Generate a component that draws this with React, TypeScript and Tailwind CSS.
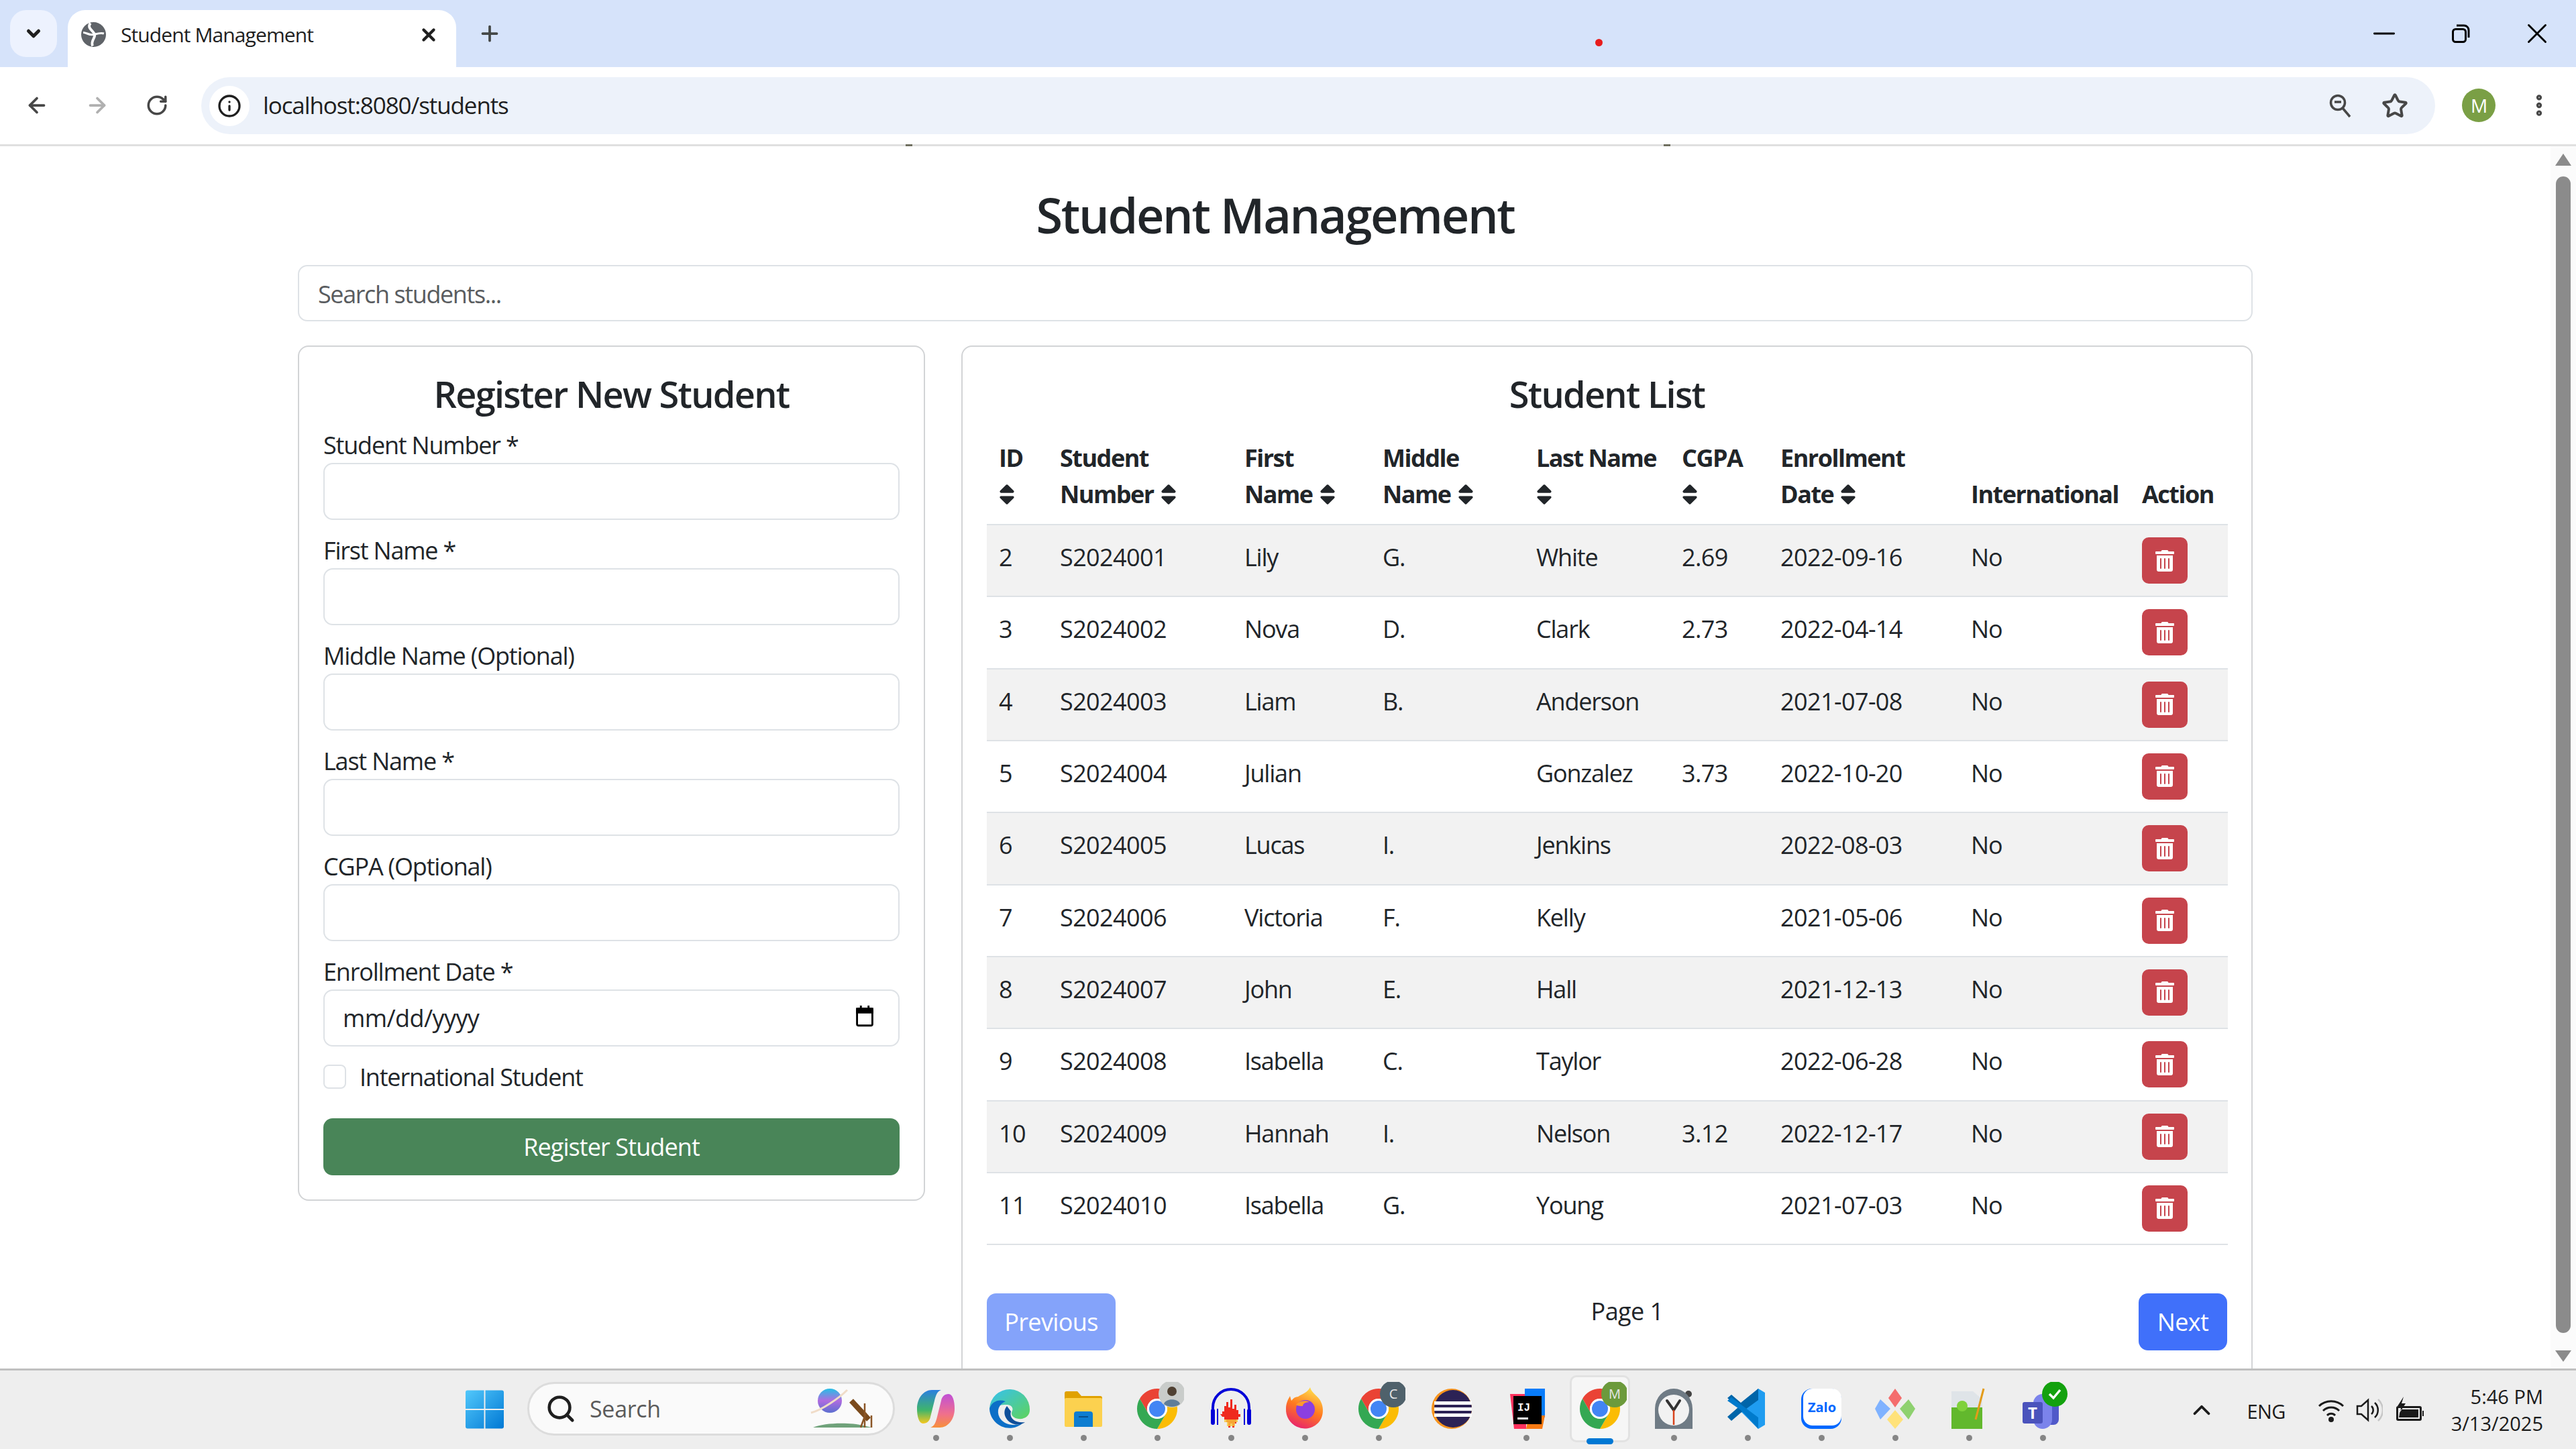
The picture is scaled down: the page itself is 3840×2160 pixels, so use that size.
import { FaSort, FaTrashAlt } from 'react-icons/fa';
import { ArrowLeft, ArrowRight, ChevronDown, ChevronUp, EllipsisVertical, Info, Minus, Plus, RotateCw, Search, Star, X } from 'lucide-react';
import type { ReactNode } from 'react';

const students = [
  [2, 'S2024001', 'Lily', 'G.', 'White', '2.69', '2022-09-16'],
  [3, 'S2024002', 'Nova', 'D.', 'Clark', '2.73', '2022-04-14'],
  [4, 'S2024003', 'Liam', 'B.', 'Anderson', '', '2021-07-08'],
  [5, 'S2024004', 'Julian', '', 'Gonzalez', '3.73', '2022-10-20'],
  [6, 'S2024005', 'Lucas', 'I.', 'Jenkins', '', '2022-08-03'],
  [7, 'S2024006', 'Victoria', 'F.', 'Kelly', '', '2021-05-06'],
  [8, 'S2024007', 'John', 'E.', 'Hall', '', '2021-12-13'],
  [9, 'S2024008', 'Isabella', 'C.', 'Taylor', '', '2022-06-28'],
  [10, 'S2024009', 'Hannah', 'I.', 'Nelson', '3.12', '2022-12-17'],
  [11, 'S2024010', 'Isabella', 'G.', 'Young', '', '2021-07-03'],
];

const fields = ['Student Number *', 'First Name *', 'Middle Name (Optional)', 'Last Name *', 'CGPA (Optional)'];

function Field({ label, children }: { label: string; children?: ReactNode }) {
  return (
    <div className="mb-[18px]">
      <label className="block h-[54px] leading-[56px]">{label}</label>
      {children ?? <input className="block w-full h-[85px] border-2 border-[#dee2e6] rounded-[14px] bg-white" />}
    </div>
  );
}

function Th({ lines, sort = true }: { lines: string[]; sort?: boolean }) {
  return (
    <th className="p-[18px] pb-[17px] text-left align-bottom font-bold leading-[54px] tracking-[-1.5px]">
      {lines.map((l, i) => (
        <div key={i} className="whitespace-nowrap">
          {l}
          {sort && i === lines.length - 1 && (
            <FaSort className={`inline-block w-[24px] h-[38px] align-[-6px] ${l ? 'ml-[10px]' : ''}`} />
          )}
        </div>
      ))}
    </th>
  );
}

function ChromeLogo({ badge, badgeColor }: { badge?: string; badgeColor?: string }) {
  return (
    <svg viewBox="0 0 80 80" className="w-[80px] h-[80px]">
      <path d="M66 25A30 30 0 0 0 14 25L27 47.500A15 15 0 0 1 40 25z" fill="#ea4335" />
      <path d="M66 25A30 30 0 0 1 40 70L53 47.500A15 15 0 0 0 40 25z" fill="#fbbc04" />
      <path d="M40 70A30 30 0 0 1 14 25L27 47.500A15 15 0 0 0 53 47.500z" fill="#34a853" />
      <circle cx="40" cy="40" r="15" fill="#fff" />
      <circle cx="40" cy="40" r="12" fill="#4285f4" />
      {badge === 'photo' && (
        <>
          <circle cx="62" cy="18" r="20" fill="#c9ccca" />
          <circle cx="62" cy="14" r="7" fill="#4f4032" />
          <path d="M50 33c2-9 22-9 24 0a20 20 0 0 1-24 0z" fill="#5f7d99" />
        </>
      )}
      {badge && badge !== 'photo' && (
        <>
          <circle cx="62" cy="18" r="20" fill={badgeColor} />
          <text x="62" y="25" textAnchor="middle" fontSize="20" fill="#e6e6e6" fontFamily="'Open Sans', sans-serif">{badge}</text>
        </>
      )}
    </svg>
  );
}

const taskIcons: ReactNode[] = [
  // copilot
  <svg viewBox="0 0 80 80" className="w-[80px] h-[80px]" key="copilot">
    <defs>
      <linearGradient id="cpA" x1="0" y1="0" x2="0" y2="1"><stop offset="0" stopColor="#2b7fe0" /><stop offset="0.6" stopColor="#3fb56b" /><stop offset="1" stopColor="#f7c81e" /></linearGradient>
      <linearGradient id="cpB" x1="0" y1="0" x2="0" y2="1"><stop offset="0" stopColor="#c04fd6" /><stop offset="0.6" stopColor="#f0708c" /><stop offset="1" stopColor="#f7903a" /></linearGradient>
    </defs>
    <path d="M34 12h14c-6 2-8 8-10 16l-6 24c-1 6-5 10-11 10-6 0-9-10-9-22 0-16 10-28 22-28z" fill="url(#cpA)" />
    <path d="M46 68H32c6-2 8-8 10-16l6-24c1-6 5-10 11-10 6 0 9 10 9 22 0 16-10 28-22 28z" fill="url(#cpB)" />
  </svg>,
  // edge
  <svg viewBox="0 0 80 80" className="w-[80px] h-[80px]" key="edge">
    <defs>
      <linearGradient id="edA" x1="0" y1="0" x2="1" y2="1"><stop offset="0" stopColor="#35c1f1" /><stop offset="1" stopColor="#5fd35b" /></linearGradient>
    </defs>
    <path d="M10 40a30 30 0 0 1 60 2c0 9-8 14-17 13-8-1-12-6-9-12 2-5-2-9-9-9-14 0-25 6-25 6z" fill="url(#edA)" />
    <path d="M10 40c3-10 13-15 24-11-10 4-14 14-9 24 5 9 17 14 34 9a30 30 0 0 1-49-22z" fill="#0c6fc7" />
    <path d="M36 36c-6 7-5 18 6 25 8 4 15 3 21-1-15 2-24-6-21-16z" fill="#0f4f99" />
  </svg>,
  // explorer
  <svg viewBox="0 0 80 80" className="w-[80px] h-[80px]" key="folder">
    <path d="M12 17a3 3 0 0 1 3-3h16l6 7h28a3 3 0 0 1 3 3v8H12z" fill="#e0a100" />
    <rect x="12" y="24" width="56" height="43" rx="2" fill="#fcd14f" />
    <path d="M26 67V48a4 4 0 0 1 4-4h20a4 4 0 0 1 4 4v19z" fill="#0d7dd1" />
    <rect x="33" y="51" width="14" height="2" fill="#0a4f8a" />
  </svg>,
  <ChromeLogo badge="photo" key="c1" />,
  // audacity
  <svg viewBox="0 0 80 80" className="w-[80px] h-[80px]" key="audacity">
    <path d="M13 50V38a27 27 0 0 1 54 0v12" fill="none" stroke="#0000d8" strokeWidth="4" />
    <rect x="10" y="40" width="6" height="24" rx="3" fill="#0000d8" />
    <rect x="64" y="40" width="6" height="24" rx="3" fill="#0000d8" />
    <rect x="19" y="40" width="2" height="24" fill="#0000d8" />
    <rect x="59" y="40" width="2" height="24" fill="#0000d8" />
    <path d="M24 48h3v-4h3v-8h3v-6h3v8h3v-12h3v14h3v-6h3v8h3v6h3v4h-3v4h-3v6h-3v6h-3v-6h-3v6h-3v-8h-3v-4h-3v-4h-3z" fill="#ef2a1e" />
    <path d="M30 56h20v4h-4v6h-12v-6h-4z" fill="#f7c53a" opacity="0.8" />
  </svg>,
  // firefox
  <svg viewBox="0 0 80 80" className="w-[80px] h-[80px]" key="firefox">
    <defs>
      <linearGradient id="ffA" x1="0.7" y1="0" x2="0.3" y2="1"><stop offset="0" stopColor="#ffe14d" /><stop offset="0.5" stopColor="#ff7a1f" /><stop offset="1" stopColor="#e8216e" /></linearGradient>
    </defs>
    <path d="M48 8c2 8 8 10 14 18 8 12 6 28-3 36a28 28 0 0 1-47-22c0-8 3-14 6-19l2 7c3-4 6-6 10-6 6-4 14-6 18-14z" fill="url(#ffA)" />
    <circle cx="41" cy="41" r="14" fill="#8b3fe0" />
    <path d="M27 34c4-4 12-8 20-4-8 0-10 4-10 6-4 0-7 0-10-2z" fill="#ff9a2e" />
  </svg>,
  <ChromeLogo badge="C" badgeColor="#4f616b" key="c2" />,
  // eclipse
  <svg viewBox="0 0 80 80" className="w-[80px] h-[80px]" key="eclipse">
    <circle cx="39" cy="40" r="30" fill="#f7941e" />
    <circle cx="41" cy="40" r="28" fill="#2c2255" />
    <rect x="13" y="29" width="56" height="5" fill="#fff" />
    <rect x="13" y="38" width="56" height="5" fill="#fff" />
    <rect x="13" y="47" width="56" height="5" fill="#fff" />
  </svg>,
  // intellij
  <svg viewBox="0 0 80 80" className="w-[80px] h-[80px]" key="idea">
    <path d="M16 18h24v52H22z" fill="#fe315d" />
    <path d="M38 10h30v42l-8 10H38z" fill="#087cfa" />
    <path d="M44 50h24l-4 20H40z" fill="#f97a12" />
    <rect x="21" y="21" width="42" height="42" fill="#000" />
    <rect x="27" y="53" width="16" height="3" fill="#fff" />
    <text x="27" y="43" fontSize="16" fontWeight="700" fill="#fff" fontFamily="'Liberation Mono', monospace">IJ</text>
  </svg>,
  <div className="w-[90px] h-[100px] flex items-center justify-center bg-[#f6f6f6] border-[3px] border-[#e2e2e2] rounded-[10px] -mt-[10px]" key="c3"><ChromeLogo badge="M" badgeColor="#6c9a3c" /></div>,
  // clock
  <svg viewBox="0 0 80 80" className="w-[80px] h-[80px]" key="clock">
    <circle cx="62" cy="18" r="5" fill="#444" />
    <path d="M12 40a28 30 0 1 1 56 0v30H12z" fill="#6f7b85" />
    <circle cx="40" cy="42" r="23" fill="#f2f2f2" />
    <path d="M40 42 30 28M40 42l9-14" stroke="#333" strokeWidth="4" strokeLinecap="round" />
    <path d="M40 42v22" stroke="#d8421b" strokeWidth="2.500" />
  </svg>,
  // vs code
  <svg viewBox="0 0 80 80" className="w-[80px] h-[80px]" key="vscode">
    <path d="M56 10 66 16v48l-10 6-26-26V34z" fill="#1f9cf0" />
    <path d="M56 10v17L30 46 16 58l-6-6 16-14-16-14 6-5 14 12z" fill="#0065a9" />
    <path d="M56 70V53L16 23l-6 5 20 14 26 28z" fill="#007acc" />
  </svg>,
  // zalo
  <svg viewBox="0 0 80 80" className="w-[80px] h-[80px]" key="zalo">
    <rect x="10" y="10" width="60" height="60" rx="16" fill="#0068ff" />
    <rect x="13" y="10" width="57" height="55" rx="14" fill="#fff" />
    <text x="41" y="45" textAnchor="middle" fontSize="20" fontWeight="700" fill="#0068ff" fontFamily="'Open Sans', sans-serif">Zalo</text>
  </svg>,
  // git gui
  <svg viewBox="0 0 80 80" className="w-[80px] h-[80px]" key="git">
    <path d="M40 10 50 24 40 38 30 24z" fill="#f46d6d" />
    <path d="M18 26 33 40 18 56 10 40z" fill="#7fb2ff" />
    <path d="M60 26 70 40 60 56 47 40z" fill="#8ed16f" />
    <path d="M40 42 52 56 40 70 28 56z" fill="#ffe27a" />
  </svg>,
  // notepad++
  <svg viewBox="0 0 80 80" className="w-[80px] h-[80px]" key="npp">
    <path d="M14 14h32l14 12v42H14z" fill="#dfe4e8" />
    <path d="M14 38h46v32H14z" fill="#62b82d" />
    <circle cx="30" cy="36" r="8" fill="#7fd13b" />
    <path d="M62 10 50 56" stroke="#e39b19" strokeWidth="3" />
  </svg>,
  // teams
  <svg viewBox="0 0 80 80" className="w-[80px] h-[80px]" key="teams">
    <rect x="44" y="22" width="20" height="42" rx="8" fill="#5059c9" />
    <rect x="26" y="18" width="28" height="52" rx="14" fill="#7b83eb" />
    <rect x="10" y="30" width="30" height="32" rx="3" fill="#4b53bc" />
    <text x="25" y="55" textAnchor="middle" fontSize="24" fontWeight="700" fill="#fff" fontFamily="'Open Sans', sans-serif">T</text>
    <circle cx="58" cy="18" r="19" fill="#13a10e" />
    <path d="M50 18l6 6 10-12" fill="none" stroke="#fff" strokeWidth="3.500" />
  </svg>,
];

export default function App() {
  return (
    <div className="w-[3840px] h-[2160px] flex flex-col overflow-hidden bg-white text-[#212529] text-[36px] font-['Open_Sans',sans-serif] tracking-[-1.2px]">
      {/* Window title bar */}
      <div className="relative h-[100px] shrink-0 flex bg-[#d6e3fa]">
        <div className="ml-[15px] mt-[15px] w-[70px] h-[70px] rounded-[24px] bg-[#edf2fe] flex items-center justify-center">
          <ChevronDown size={30} strokeWidth={4} color="#1f1f1f" />
        </div>
        <div className="ml-[16px] mt-[15px] w-[579px] h-[85px] rounded-t-[26px] bg-white flex items-center pl-[20px] pr-[26px] pb-[12px]">
          <svg viewBox="0 0 24 24" className="w-[37px] h-[37px] shrink-0">
            <circle cx="12" cy="12" r="12" fill="#5f6368" />
            <path d="M9 1C5 6 12 8 13 12 14 15 9 18 11 23" fill="none" stroke="#fff" strokeWidth="2.500" />
            <path d="M2 10c3 0 6 3 10 2s7-2 10-1" fill="none" stroke="#fff" strokeWidth="2" />
          </svg>
          <span className="ml-[22px] text-[30px] tracking-[-0.9px] text-[#1f1f1f] whitespace-nowrap">Student Management</span>
          <X className="ml-auto" size={30} strokeWidth={3.5} color="#1f1f1f" />
        </div>
        <Plus className="ml-[32px] mt-[32px]" size={36} strokeWidth={2.5} color="#444746" />
        <div className="absolute left-[2378px] top-[58px] w-[11px] h-[11px] rounded-full bg-[#e81c1c]" />
        <div className="ml-auto flex pt-[25px] pr-[33px] gap-[64px]">
          <Minus size={50} strokeWidth={1.4} color="#000" />
          <svg viewBox="0 0 50 50" className="w-[50px] h-[50px]" fill="none" stroke="#000" strokeWidth="3">
            <rect x="13.500" y="18.500" width="19" height="19" rx="4" />
            <path d="M19 13h11a7 7 0 0 1 7 7v11" />
          </svg>
          <X size={50} strokeWidth={1.4} color="#000" />
        </div>
      </div>

      {/* Browser toolbar */}
      <div className="relative h-[118px] shrink-0 flex items-start border-b-[3px] border-[#e0e0e0] bg-white">
        <div className="absolute left-[1350px] top-[115px] w-[10px] h-[3px] bg-[#6f6f5f]" />
        <div className="absolute left-[2480px] top-[115px] w-[10px] h-[3px] bg-[#6f6f5f]" />
        <div className="w-[300px] h-[115px] flex items-center pl-[37px] gap-[54px] pb-[1px]">
          <ArrowLeft size={36} strokeWidth={2.5} color="#474747" />
          <ArrowRight size={36} strokeWidth={2.5} color="#b0b0b0" />
          <RotateCw size={34} strokeWidth={2.5} color="#474747" />
        </div>
        <div className="mt-[15px] w-[3330px] h-[85px] rounded-full bg-[#edf2fa] flex items-center pl-[12px]">
          <div className="w-[60px] h-[60px] rounded-full bg-white flex items-center justify-center">
            <Info size={36} strokeWidth={2.2} color="#1f1f1f" />
          </div>
          <span className="ml-[20px] text-[35px] tracking-[-1.1px] text-[#1f1f1f]">localhost:8080/students</span>
          <svg viewBox="0 0 40 40" className="ml-auto w-[40px] h-[40px]" fill="none" stroke="#474747" strokeWidth="3.500">
            <circle cx="15" cy="15" r="10.500" />
            <path d="M22 23l11 13" />
            <path d="M10 14h10" />
          </svg>
          <Star className="ml-[40px] mr-[40px]" size={40} strokeWidth={2.4} color="#474747" />
        </div>
        <div className="mt-[32px] ml-[40px] w-[50px] h-[50px] rounded-full bg-[#7a9f45] text-white text-[28px] leading-[50px] text-center">M</div>
        <EllipsisVertical className="mt-[37px] ml-[45px]" size={40} strokeWidth={3} color="#474747" />
      </div>

      {/* Page */}
      <div className="flex-1 min-h-0 flex overflow-hidden">
        <main className="flex-1 min-w-0 px-[444px] pr-[444px] pt-[59px] overflow-hidden">
          <h1 className="text-[72px] leading-[86px] font-semibold tracking-[-2.3px] text-center">Student Management</h1>
          <input placeholder="Search students..." className="mt-[32px] block w-full h-[84px] px-[28px] pt-[2px] border-2 border-[#dee2e6] rounded-[14px] tracking-[-1.4px] placeholder:text-[#595c5f]" />
          <div className="mt-[36px] flex items-start gap-[54px]">
            {/* Register form */}
            <section className="w-[935px] h-[1275px] shrink-0 border-2 border-[#d2d4d6] rounded-[16px] px-[36px] pt-[38px]">
              <h3 className="text-[54px] leading-[65px] font-semibold tracking-[-1.7px] text-center mb-[16px]">Register New Student</h3>
              {fields.map(f => <Field key={f} label={f} />)}
              <Field label="Enrollment Date *">
                <div className="h-[85px] border-2 border-[#dee2e6] rounded-[14px] flex items-center pl-[27px] pr-[36px] tracking-[-0.6px]">
                  <span>mm/dd/yyyy</span>
                  <svg viewBox="0 0 24 28" className="ml-auto w-[28px] h-[32px] -mt-[6px]" fill="none" stroke="#000" strokeWidth="2.500">
                    <rect x="2" y="4" width="20" height="22" rx="2" />
                    <path d="M2 4h20v5H2z" fill="#000" />
                    <path d="M7 0v4M17 0v4" />
                  </svg>
                </div>
              </Field>
              <div className="flex items-center h-[54px]">
                <div className="w-[34px] h-[36px] border-2 border-[#dee2e6] rounded-[8px]" />
                <span className="ml-[20px] mt-[2px]">International Student</span>
              </div>
              <button className="mt-[35px] w-full h-[85px] rounded-[14px] bg-[#498558] text-white tracking-[-0.9px]">Register Student</button>
            </section>

            {/* Student table */}
            <section className="flex-1 min-w-0 h-[1600px] border-2 border-[#d2d4d6] rounded-[16px] px-[36px] pt-[38px]">
              <h3 className="text-[54px] leading-[65px] font-semibold tracking-[-1.7px] text-center mb-[18px]">Student List</h3>
              <table className="table-fixed w-full border-collapse">
                <colgroup>
                  <col className="w-[91px]" />
                  <col className="w-[275px]" />
                  <col className="w-[206px]" />
                  <col className="w-[229px]" />
                  <col className="w-[217px]" />
                  <col className="w-[147px]" />
                  <col className="w-[284px]" />
                  <col className="w-[255px]" />
                  <col className="w-[146px]" />
                </colgroup>
                <thead>
                  <tr>
                    <Th lines={['ID', '']} />
                    <Th lines={['Student', 'Number']} />
                    <Th lines={['First', 'Name']} />
                    <Th lines={['Middle', 'Name']} />
                    <Th lines={['Last Name', '']} />
                    <Th lines={['CGPA', '']} />
                    <Th lines={['Enrollment', 'Date']} />
                    <Th lines={['International']} sort={false} />
                    <Th lines={['Action']} sort={false} />
                  </tr>
                </thead>
                <tbody>
                  {students.map((s, i) => (
                    <tr key={s[0]} className={`h-[107.330px] border-t-2 border-[#dee2e6] ${i === students.length - 1 ? 'border-b-2' : ''} ${i % 2 === 0 ? 'bg-[#f2f2f2]' : ''}`}>
                      {s.map((v, j) => (
                        <td key={j} className={`pt-[19px] px-[18px] align-top leading-[58px] whitespace-nowrap ${j === 2 || j === 3 || j === 4 ? '' : 'tracking-[-0.6px]'}`}>{v}</td>
                      ))}
                      <td className="pt-[19px] px-[18px] align-top leading-[58px]">No</td>
                      <td className="p-[18px] align-top">
                        <button className="w-[68px] h-[69px] rounded-[10px] bg-[#c6444c] flex items-center justify-center">
                          <FaTrashAlt size={32} color="#fff" />
                        </button>
                      </td>
                    </tr>
                  ))}
                </tbody>
              </table>
              <div className="mt-[72px] flex justify-between items-start tracking-[-0.6px]">
                <button className="w-[192px] h-[85px] rounded-[14px] bg-[#84a3fa] text-white">Previous</button>
                <span className="leading-[54px]">Page 1</span>
                <button className="w-[132px] h-[85px] rounded-[14px] bg-[#4070fa] text-white">Next</button>
              </div>
            </section>
          </div>
        </main>

        {/* Scrollbar */}
        <div className="w-[38px] shrink-0 bg-[#fbfbfb] flex flex-col items-center pt-[11px]">
          <div className="w-0 h-0 border-x-[12px] border-x-transparent border-b-[18px] border-b-[#8b8b8b]" />
          <div className="mt-[16px] w-[22px] h-[1724px] rounded-full bg-[#8b8b8b]" />
          <div className="mt-[26px] w-0 h-0 border-x-[12px] border-x-transparent border-t-[17px] border-t-[#8b8b8b]" />
        </div>
      </div>

      {/* Windows taskbar */}
      <div className="h-[120px] shrink-0 flex border-t-[3px] border-[#c0c0c0] bg-[#eeeeee] pl-[694px] tracking-normal">
        <svg viewBox="0 0 58 58" className="mt-[29px] w-[57px] h-[58px] shrink-0">
          <defs>
            <linearGradient id="win" x1="0" y1="0" x2="1" y2="1"><stop offset="0" stopColor="#52c8fb" /><stop offset="1" stopColor="#0078d4" /></linearGradient>
          </defs>
          <path d="M0 3a3 3 0 0 1 3-3h25v28H0zM30 0h25a3 3 0 0 1 3 3v25H30zM0 30h28v28H3a3 3 0 0 1-3-3zM30 30h28v25a3 3 0 0 1-3 3H30z" fill="url(#win)" />
        </svg>
        <div className="ml-[35px] mt-[17px] w-[548px] h-[80px] shrink-0 rounded-full bg-[#fafafa] border-[3px] border-[#dcdcdc] flex items-center pl-[24px]">
          <Search size={46} strokeWidth={2.4} color="#1f1f1f" />
          <span className="ml-[20px] text-[34px] tracking-[-0.3px] text-[#5a5a5a]">Search</span>
          <svg viewBox="0 0 104 60" className="ml-auto mr-[20px] w-[104px] h-[60px]">
            <defs>
              <linearGradient id="planet" x1="0" y1="0" x2="0" y2="1"><stop offset="0" stopColor="#25bfe6" /><stop offset="0.5" stopColor="#b06be0" /><stop offset="1" stopColor="#5b6fd0" /></linearGradient>
            </defs>
            <path d="M5 58c15-7 50-8 70-4l18 4z" fill="#6fa27a" />
            <ellipse cx="30" cy="18" rx="18" ry="18" fill="url(#planet)" />
            <path d="M2 36C18 32 44 14 56 2" fill="none" stroke="#f0dcc8" strokeWidth="3" />
            <path d="M62 18 88 46" stroke="#7a4a1c" strokeWidth="8" />
            <path d="M82 22v36M92 40v18M76 58l8-22" stroke="#8a5525" strokeWidth="2.500" />
          </svg>
        </div>
        <div className="ml-[6px] flex items-start">
          {taskIcons.map((icon, i) => (
            <div key={i} className="relative w-[110px] h-full flex flex-col items-center pt-[17px]">
              {icon}
              {i === 9 ? (
                <div className="absolute bottom-[7px] w-[40px] h-[9px] rounded-full bg-[#0078d4]" />
              ) : i !== 7 ? (
                <div className="-mt-[1px] w-[9px] h-[9px] rounded-full bg-[#858585]" />
              ) : null}
            </div>
          ))}
        </div>
        <div className="ml-auto pr-[49px] flex items-center text-[#1b1b1b]">
          <ChevronUp size={42} strokeWidth={2.2} className="mr-[46px]" />
          <span className="text-[29px] tracking-[-0.6px] mr-[48px] mt-[4px]">ENG</span>
          <svg viewBox="0 0 40 36" className="w-[40px] h-[36px]" fill="none" stroke="#1b1b1b" strokeWidth="3">
            <path d="M2 12a26 26 0 0 1 36 0M8 19a17 17 0 0 1 24 0M14 26a8 8 0 0 1 12 0" />
            <circle cx="20" cy="32" r="2.500" fill="#1b1b1b" />
          </svg>
          <svg viewBox="0 0 40 40" className="ml-[17px] w-[40px] h-[40px]" fill="none" stroke="#1b1b1b" strokeWidth="2.500">
            <path d="M2 14h6l10-9v30l-10-9H2z" />
            <path d="M23 14a8 8 0 0 1 0 12M28 9a15 15 0 0 1 0 22" />
            <path d="M33 4a22 22 0 0 1 0 32" stroke="#c6c6c6" />
          </svg>
          <svg viewBox="0 0 42 40" className="ml-[19px] w-[42px] h-[40px]" fill="#1b1b1b">
            <path d="M4 14h32a3 3 0 0 1 3 3v16a3 3 0 0 1-3 3H4a3 3 0 0 1-3-3V17a3 3 0 0 1 3-3zm0 3v16h32V17z" />
            <path d="M7 19h27v12H5zM40 21h2v8h-2zM12 0 3 14h6l-3 10 9-14H9z" />
          </svg>
          <div className="ml-[41px] text-right text-[29px] leading-[40px]">
            <div>5:46 PM</div>
            <div>3/13/2025</div>
          </div>
        </div>
      </div>
    </div>
  );
}
